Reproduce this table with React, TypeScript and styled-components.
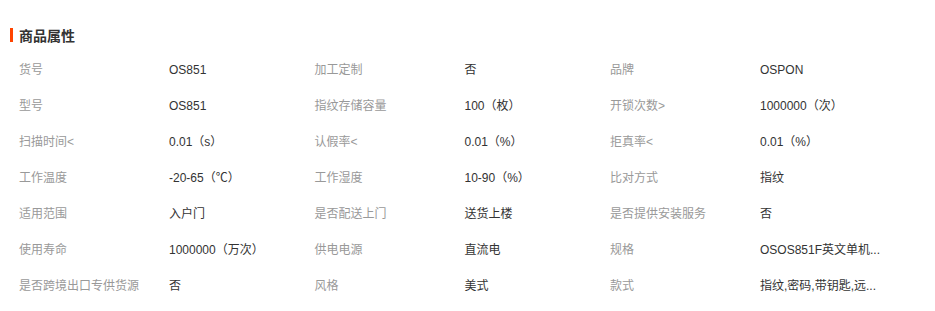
import React from 'react'
import styled, { createGlobalStyle } from 'styled-components'

const GlobalStyle = createGlobalStyle`
  html, body {
    margin: 0;
    padding: 0;
    background: #fff;
  }
  body {
    font-family: "Liberation Sans", "Noto Sans CJK SC", sans-serif;
  }
`

// long values come already shortened, as the shop shows them
const attributes: [string, string][] = [
  ['货号', 'OS851'],
  ['加工定制', '否'],
  ['品牌', 'OSPON'],
  ['型号', 'OS851'],
  ['指纹存储容量', '100（枚）'],
  ['开锁次数>', '1000000（次）'],
  ['扫描时间<', '0.01（s）'],
  ['认假率<', '0.01（%）'],
  ['拒真率<', '0.01（%）'],
  ['工作温度', '-20-65（℃）'],
  ['工作湿度', '10-90（%）'],
  ['比对方式', '指纹'],
  ['适用范围', '入户门'],
  ['是否配送上门', '送货上楼'],
  ['是否提供安装服务', '否'],
  ['使用寿命', '1000000（万次）'],
  ['供电电源', '直流电'],
  ['规格', 'OSOS851F英文单机...'],
  ['是否跨境出口专供货源', '否'],
  ['风格', '美式'],
  ['款式', '指纹,密码,带钥匙,远...'],
]

export default function App() {
  return (
    <>
      <GlobalStyle />
      <Panel>
        <Title>商品属性</Title>
        <Grid>
          {attributes.map(([label, value]) => (
            <Item key={label}>
              <Label>{label}</Label>
              <Value>{value}</Value>
            </Item>
          ))}
        </Grid>
      </Panel>
    </>
  )
}

const Panel = styled.div`
  width: 935px;
  height: 311px;
  padding: 25px 0 0 10px;
  box-sizing: border-box;
  overflow: hidden;
`

const Title = styled.h3`
  display: flex;
  align-items: center;
  gap: 6px;
  margin: 0;
  height: 20px;
  color: #333;
  font-size: 14px;
  font-weight: bold;
  &::before {
    content: '';
    width: 3px;
    height: 14px;
    background: #ff4400;
  }
`

const Grid = styled.div`
  display: grid;
  grid-template-columns: repeat(3, 295.5px);
  grid-auto-rows: 36px;
  margin-top: 7px;
  padding-left: 9px;
`

const Item = styled.div`
  display: flex;
  align-items: center;
  font-size: 12px;
  line-height: 16px;
`

const Label = styled.div`
  flex: 0 0 150px;
  color: #999;
  white-space: nowrap;
`

const Value = styled.div`
  color: #333;
  white-space: nowrap;
`
